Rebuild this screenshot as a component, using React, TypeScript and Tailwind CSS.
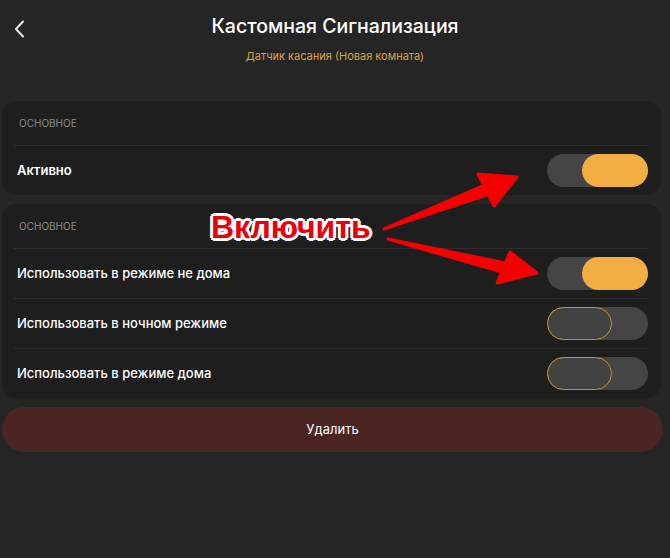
import React from 'react';

const font = { fontFamily: 'Inter, "Noto Sans", sans-serif' };

function Toggle({ on }: { on: boolean }) {
  return (
    <div className={`flex h-[33px] w-[101px] rounded-full bg-[#454545] ${on ? 'justify-end' : 'justify-start'}`}>
      {on ? (
        <div className="h-[33px] w-[66px] rounded-full bg-[#f2ae42]" />
      ) : (
        <div className="h-[33px] w-[65px] rounded-full border border-[#c2913f] bg-[#424242]" />
      )}
    </div>
  );
}

function Row({ label, on, bold }: { label: string; on: boolean; bold?: boolean }) {
  return (
    <div className="mx-[12px] flex h-[50px] items-center justify-between border-t border-[#2e2e2e] pl-[3px] pr-[1px]">
      <span className={`text-[13px] text-white ${bold ? 'font-semibold' : 'font-medium'}`}>{label}</span>
      <Toggle on={on} />
    </div>
  );
}

function Card({ children }: { children: React.ReactNode }) {
  return (
    <div className="ml-[2px] w-[659px] rounded-[14px] bg-[#1e1e1e]">
      <div className="flex h-[44px] items-center pl-[17px] pt-[1px] text-[10px] uppercase text-[#8c8c8c]">Основное</div>
      {children}
    </div>
  );
}

export default function App() {
  return (
    <div className="relative h-[558px] w-[670px] overflow-hidden bg-[#252525]" style={font}>
      <header className="relative flex h-[101px] flex-col items-center">
        <svg className="absolute left-[10px] top-[17px]" width="22" height="24" viewBox="0 0 22 24" fill="none">
          <path d="M13 4.5 L6 12 L13 19.5" stroke="#e6e6e6" strokeWidth="2" strokeLinecap="round" strokeLinejoin="round" />
        </svg>
        <h1 className="mt-[12px] text-[19.5px] font-medium text-white">Кастомная Сигнализация</h1>
        <p className="mt-[7px] text-[11px] text-[#d9a441]">Датчик касания (Новая комната)</p>
      </header>

      <div className="flex flex-col gap-[9px]">
        <Card>
          <Row label="Активно" on bold />
        </Card>
        <Card>
          <Row label="Использовать в режиме не дома" on />
          <Row label="Использовать в ночном режиме" on={false} />
          <Row label="Использовать в режиме дома" on={false} />
        </Card>
        <button className="ml-[2px] h-[45px] w-[661px] rounded-full bg-[#4a2523] text-[13px] text-white">Удалить</button>
      </div>

      {/* annotation overlay */}
      <div
        className="absolute left-[211px] top-[211px] text-[32px] font-bold leading-none text-[#e8000b] [text-shadow:2px_0_0_#fff,-2px_0_0_#fff,0_2px_0_#fff,0_-2px_0_#fff,2px_2px_0_#fff,-2px_-2px_0_#fff,2px_-2px_0_#fff,-2px_2px_0_#fff,3px_0_0_#fff,-3px_0_0_#fff,0_3px_0_#fff,0_-3px_0_#fff]"
        style={{ fontFamily: '"Liberation Sans", Arial, sans-serif' }}
      >
        Включить
      </div>
      <svg className="pointer-events-none absolute left-0 top-0" width="670" height="558">
        <polygon
          points="384,229 483.8,185.5 478,174 517,177 494,206 488.2,194.5"
          fill="#f50000"
          stroke="#f50000"
          strokeWidth="3"
          strokeLinejoin="round"
        />
        <polygon
          points="388,239 505.4,262.9 510,252 537,273 497,283 501.6,272.1"
          fill="#f50000"
          stroke="#f50000"
          strokeWidth="3"
          strokeLinejoin="round"
        />
      </svg>
    </div>
  );
}
